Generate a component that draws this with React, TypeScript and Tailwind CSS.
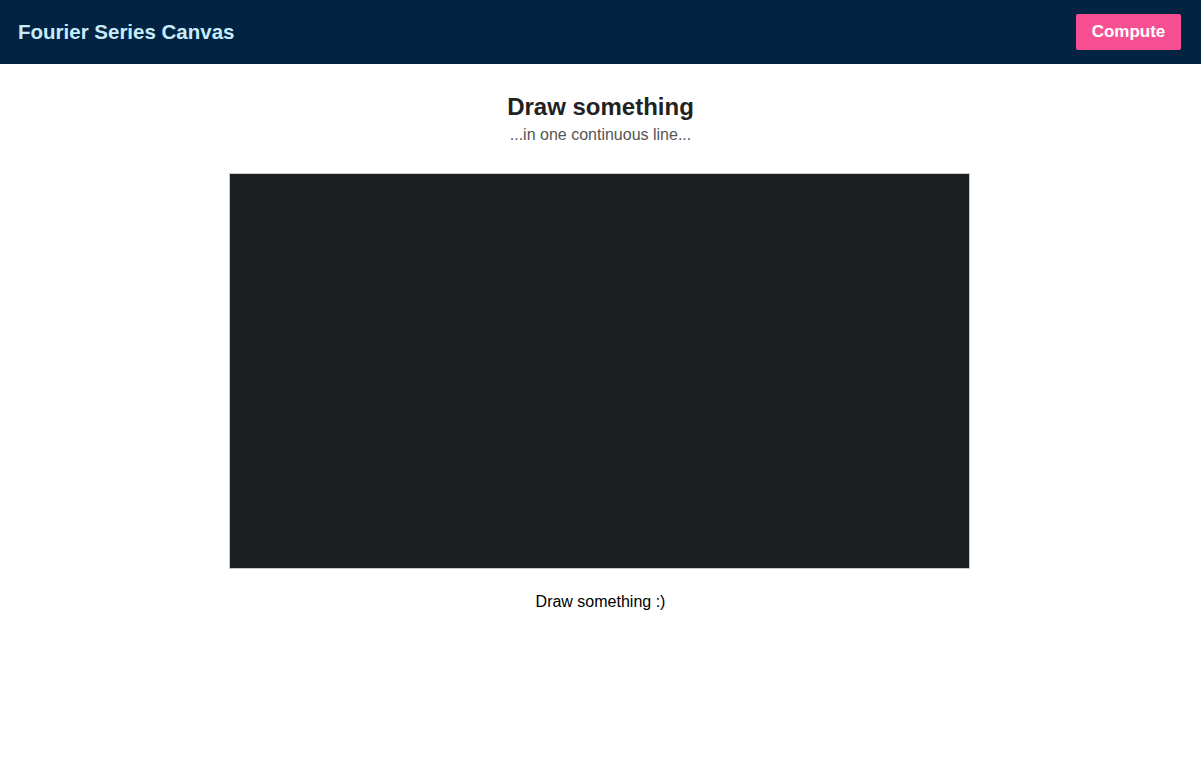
export default function App() {
  return (
    <div className="min-h-[780px] bg-white" style={{ fontFamily: '"Liberation Sans", Arial, sans-serif' }}>
      <header className="h-16 bg-[#022342] flex items-center justify-between pl-[18px] pr-5">
        <h1 className="text-[20.5px] font-bold text-[#c6ecfb]">Fourier Series Canvas</h1>
        <button className="h-[36px] px-[15px] rounded-[2px] bg-[#f65092] text-white font-bold text-[17px] w-[105px]">Compute</button>
      </header>
      <main className="flex flex-col items-center">
        <h2 className="mt-[29px] text-[24px] leading-[28px] font-bold text-[#222]">Draw something</h2>
        <p className="mt-[5px] text-[16px] leading-[18px] text-[#555]">...in one continuous line...</p>
        <div className="mt-[29px] mr-[2px] w-[741px] h-[396px] border border-[#c8c8c8] bg-[#1d2023]" />
        <p className="mt-[24px] text-[16px] leading-[18px] text-black">Draw something :)</p>
      </main>
    </div>
  );
}
